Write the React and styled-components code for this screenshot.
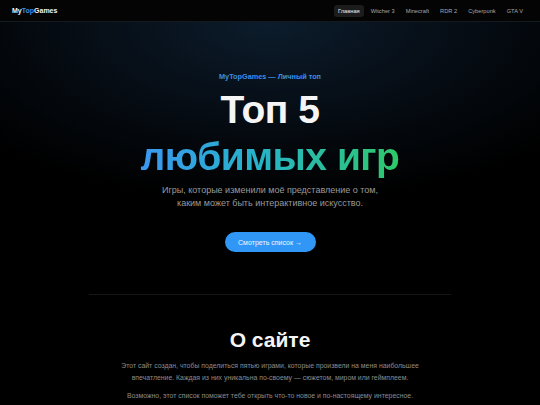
import styled, { createGlobalStyle } from 'styled-components';

const GlobalStyle = createGlobalStyle`
  html, body {
    margin: 0;
    padding: 0;
    background: #000;
  }
  body {
    font-family: "Liberation Sans", Arial, sans-serif;
    color: #fff;
  }
`

const Page = styled.div`
  min-height: 405px;
  background: #000;
`

const Header = styled.header`
  display: flex;
  align-items: center;
  justify-content: space-between;
  height: 21px;
  padding: 0 13px 0 12px;
  background: #040404;
  border-bottom: 1px solid #141a20;
`

const Logo = styled.div`
  font-size: 7px;
  font-weight: 700;
  color: #f2f2f2;
  span { color: #3b8fe0; }
`

const Nav = styled.nav`
  display: flex;
  align-items: center;
  gap: 3px;
`

const NavItem = styled.a`
  font-size: 5.7px;
  padding: 3px 4px;
  border-radius: 3px;
  color: ${p => (p.$active ? '#f0f0f0' : '#a8a8a8')};
  background: ${p => (p.$active ? '#1c1c1c' : 'transparent')};
  line-height: 6px;
`

const Hero = styled.section`
  display: flex;
  flex-direction: column;
  align-items: center;
  padding: 50px 0 42px;
  background: radial-gradient(ellipse 380px 180px at 50% 0%, #0c1c2c 0%, #060d15 50%, #000 100%);
  text-align: center;
`

const Eyebrow = styled.div`
  font-size: 7.3px;
  font-weight: 700;
  line-height: 9px;
  color: #3a8ee6;
`

const Title = styled.h1`
  margin: 5px 0 0;
  font-size: 39px;
  line-height: 47px;
  font-weight: 700;
  letter-spacing: -0.5px;
  color: #f5f5f5;
`

const Gradient = styled.span`
  background: linear-gradient(90deg, #3a98f0 0%, #27b3c9 45%, #2ec96a 100%);
  -webkit-background-clip: text;
  background-clip: text;
  color: transparent;
`

const Lead = styled.p`
  margin: 4px 0 0;
  font-size: 9px;
  line-height: 13px;
  color: #9a9a9a;
`

const Button = styled.a`
  display: flex;
  align-items: center;
  justify-content: center;
  margin-top: 22px;
  width: 91px;
  height: 20px;
  border-radius: 10px;
  background: #3197f7;
  color: #f0f6ff;
  font-size: 7px;
`

const Divider = styled.hr`
  margin: 0 89px;
  border: none;
  border-top: 1px solid #161616;
`

const About = styled.section`
  display: flex;
  flex-direction: column;
  align-items: center;
  padding-top: 32px;
  text-align: center;
`

const AboutTitle = styled.h2`
  margin: 0;
  font-size: 21px;
  line-height: 25px;
  font-weight: 700;
  color: #f5f5f5;
`

const AboutText = styled.p`
  margin: ${p => (p.$first ? '8px' : '6px')} 0 0;
  max-width: 320px;
  font-size: 6.9px;
  line-height: 12px;
  color: #8c8c8c;
`

const links = ['Главная', 'Witcher 3', 'Minecraft', 'RDR 2', 'Cyberpunk', 'GTA V']

export default function App() {
  return (
    <Page>
      <GlobalStyle />
      <Header>
        <Logo>My<span>Top</span>Games</Logo>
        <Nav>
          {links.map((l, i) => (
            <NavItem key={l} $active={i === 0}>{l}</NavItem>
          ))}
        </Nav>
      </Header>
      <Hero>
        <Eyebrow>MyTopGames — Личный топ</Eyebrow>
        <Title>
          Топ 5<br />
          <Gradient>любимых игр</Gradient>
        </Title>
        <Lead>
          Игры, которые изменили моё представление о том,<br />
          каким может быть интерактивное искусство.
        </Lead>
        <Button>Смотреть список →</Button>
      </Hero>
      <Divider />
      <About>
        <AboutTitle>О сайте</AboutTitle>
        <AboutText $first>
          Этот сайт создан, чтобы поделиться пятью играми, которые произвели на меня наибольшее
          впечатление. Каждая из них уникальна по-своему — сюжетом, миром или геймплеем.
        </AboutText>
        <AboutText>
          Возможно, этот список поможет тебе открыть что-то новое и по-настоящему интересное.
        </AboutText>
      </About>
    </Page>
  );
}
